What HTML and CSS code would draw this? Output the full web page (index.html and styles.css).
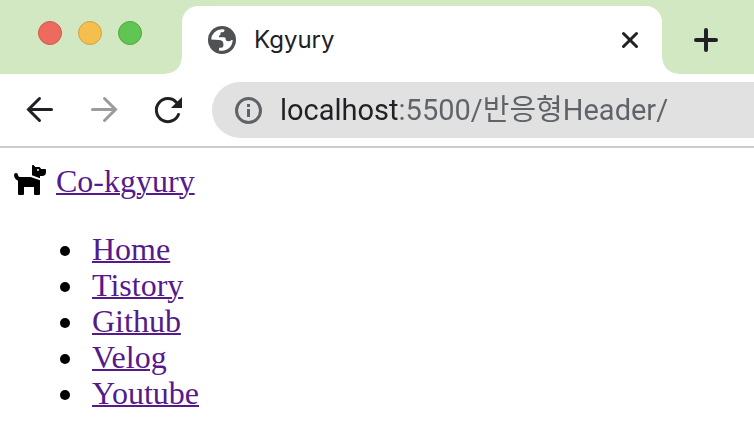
FILE: index.html
```html
<!DOCTYPE html>
<html lang="ko">

<head>
    <meta charset="UTF-8">
    <meta name="viewport" content="width=device-width, initial-scale=1.0">
    <title>Kgyury</title>
    <link rel="stylesheet" href="styles.css">
</head>

<body>
    <div class="tabBar">
        <div class="lights">
            <button class="red" aria-label="Close window"></button>
            <button class="yellow" aria-label="Minimize window"></button>
            <button class="green" aria-label="Zoom window"></button>
        </div>
        <div class="tab">
            <svg class="globe" viewBox="0 0 28 28" aria-hidden="true">
                <circle cx="14" cy="14" r="14" fill="#505155" />
                <path fill="#fff" d="M3.2 13.6A10.8 10.8 0 0 1 14 3.2q1.4 0 2.4.4v.9q0 1.8-1.8 1.8h-1.2q-1 0-1 1v1.2q0 1-1 1h-.4v1.7h5.2q1.5 0 1.5 1.5v1.2q.8 1.4 3 1.4 1.8 0 2.6-1.4h1.4A10.8 10.8 0 0 1 11 24.4v-2.6h2q2.4 0 2.4-2v-1.6q0-4.2-4.6-4.2z" />
            </svg>
            <span class="title">Kgyury</span>
            <button class="close" aria-label="Close tab">
                <svg viewBox="0 0 20 20"><path d="M3.5 3.5L16.5 16.5M16.5 3.5L3.5 16.5" /></svg>
            </button>
        </div>
        <button class="newTab" aria-label="New tab">
            <svg viewBox="0 0 28 28"><path d="M14 4V24M4 14H24" /></svg>
        </button>
    </div>

    <div class="toolbar">
        <button aria-label="Back">
            <svg viewBox="0 0 32 32"><path d="M27.5 15.5H5M15.5 4.5L4.5 15.5L15.5 26.5" /></svg>
        </button>
        <button class="forward" aria-label="Forward" disabled>
            <svg viewBox="0 0 32 32"><path d="M4.5 15.5H27M16.5 4.5L27.5 15.5L16.5 26.5" /></svg>
        </button>
        <button aria-label="Reload">
            <svg viewBox="0 0 32 32">
                <path d="M26.5 20.5A11.5 11.5 0 1 1 24.5 8.5" />
                <path class="tip" d="M30 3V14H19Z" />
            </svg>
        </button>
        <label class="address">
            <svg viewBox="0 0 28 28" aria-hidden="true">
                <circle cx="14.5" cy="14.5" r="12" />
                <path d="M14.5 13V21M14.5 8V11" />
            </svg>
            <input type="text" aria-label="Address" value="localhost:5500/반응형Header/">
        </label>
    </div>

    <div class="page">
        <div class="logo">
            <svg viewBox="0 0 576 512" aria-hidden="true">
                <path d="M298.06,224,448,277.55V496a16,16,0,0,1-16,16H368a16,16,0,0,1-16-16V384H192V496a16,16,0,0,1-16,16H112a16,16,0,0,1-16-16V282.09C58.84,268.84,32,233.66,32,192a32,32,0,0,1,64,0,32.06,32.06,0,0,0,32,32ZM544,112v32a64,64,0,0,1-64,64H448v35.58L320,197.87V48c0-14.25,17.22-21.39,27.31-11.31L374.59,64h53.63c10.91,0,23.75,7.92,28.62,17.69L464,96h64A16,16,0,0,1,544,112Zm-112,0a16,16,0,1,0-16,16A16,16,0,0,0,432,112Z" />
            </svg>
            <a href="#">Co-kgyury</a>
        </div>
        <ul class="menu">
            <li><a href="#">Home</a></li>
            <li><a href="#">Tistory</a></li>
            <li><a href="#">Github</a></li>
            <li><a href="#">Velog</a></li>
            <li><a href="#">Youtube</a></li>
        </ul>
    </div>
</body>

</html>
```
FILE: styles.css
```css
* {
    box-sizing: border-box;
}

body {
    margin: 0;
    background-color: white;
    overflow-x: hidden;
}

button {
    display: flex;
    padding: 0;
    border: none;
    background: none;
}

svg {
    flex: none;
}

/* 탭 */
.tabBar {
    display: flex;
    align-items: flex-end;
    height: 74px;
    background-color: #d2e8c2;
}

.lights {
    display: flex;
    gap: 16px;
    align-self: flex-start;
    padding: 21px 40px 0 38px;
}

.lights button {
    width: 24px;
    height: 24px;
    border: 1px solid #d8554b;
    border-radius: 50%;
    background-color: #ec6a5e;
}

.lights .yellow {
    border-color: #d6a041;
    background-color: #f4bf4f;
}

.lights .green {
    border-color: #4ea73e;
    background-color: #61c554;
}

.tab {
    position: relative;
    display: flex;
    align-items: center;
    flex: 0 1 480px;
    height: 68px;
    padding: 0 22px 0 26px;
    border-radius: 16px 16px 0 0;
    background-color: white;
}

.tab::before,
.tab::after {
    content: "";
    position: absolute;
    bottom: 0;
    width: 16px;
    height: 16px;
}

.tab::before {
    right: 100%;
    background: radial-gradient(circle at 0 0, transparent 15px, white 16px);
}

.tab::after {
    left: 100%;
    background: radial-gradient(circle at 100% 0, transparent 15px, white 16px);
}

.globe {
    width: 28px;
    height: 28px;
}

.title {
    flex: 1;
    margin-left: 18px;
    font: 24px/28px Inter, sans-serif;
    color: #202124;
}

.close svg,
.newTab svg {
    fill: none;
    stroke: #202124;
    stroke-width: 3;
    stroke-linecap: round;
}

.close svg {
    width: 20px;
    height: 20px;
}

.newTab {
    align-items: center;
    height: 68px;
    margin-left: 30px;
}

.newTab svg {
    width: 28px;
    height: 28px;
    stroke-width: 4;
}

/* 주소창 */
.toolbar {
    display: flex;
    align-items: center;
    gap: 32px;
    height: 74px;
    padding-left: 24px;
    border-bottom: 2px solid #ccc;
}

.toolbar button svg {
    width: 32px;
    height: 32px;
    fill: none;
    stroke: #202124;
    stroke-width: 3;
    stroke-linecap: round;
}

.toolbar .forward svg {
    stroke: #9b9b9b;
}

.toolbar button .tip {
    fill: #202124;
    stroke: none;
}

.address {
    display: flex;
    align-items: center;
    flex: 1;
    height: 56px;
    margin-left: -4px;
    padding-left: 22px;
    border-radius: 28px 0 0 28px;
    background-color: #e1e1e1;
}

.address svg {
    width: 28px;
    height: 28px;
    fill: none;
    stroke: #5f6368;
    stroke-width: 3;
}

.address input {
    flex: 1;
    min-width: 0;
    margin-left: 18px;
    padding: 0;
    border: none;
    outline: none;
    font: 29px/36px Roboto, "Noto Sans CJK KR", sans-serif;
    /* 호스트 이름만 진하게 */
    color: transparent;
    background: linear-gradient(to right, #202124 119px, #5f6368 119px);
    -webkit-background-clip: text;
    background-clip: text;
}

/* 본문 */
.page {
    padding: 15px 12px;
    font: 32px/36px "Liberation Serif", serif;
    color: black;
}

.page a {
    color: #551a8b;
    text-decoration-thickness: 2px;
}

.logo {
    display: flex;
    gap: 8px;
}

.logo svg {
    width: 36px;
    height: 32px;
}

.menu {
    margin: 32px 0 0;
    padding-left: 48px;
    list-style: none;
}

.menu li {
    display: flex;
    align-items: center;
}

.menu li::before {
    content: "";
    width: 10px;
    height: 10px;
    margin: 4px 22px 0 0;
    border-radius: 50%;
    background-color: black;
}
```
